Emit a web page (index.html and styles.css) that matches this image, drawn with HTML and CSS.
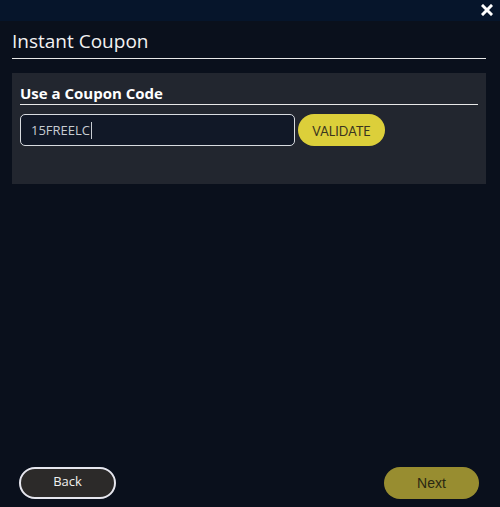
FILE: index.html
```html
<!DOCTYPE html>
<html>
<head>
<meta charset="utf-8">
<link rel="stylesheet" href="styles.css">
</head>
<body>
<div class="modal">
  <div class="topbar">
    <svg class="close" width="12" height="12" viewBox="0 0 12 12"><path d="M2 2 L10 10 M10 2 L2 10" stroke="#fff" stroke-width="3" stroke-linecap="square"/></svg>
  </div>
  <div class="content">
    <h1 class="title">Instant Coupon</h1>
    <div class="panel">
      <h2 class="panel-title">Use a Coupon Code</h2>
      <div class="row">
        <div class="input"><span class="value">15FREELC</span><span class="caret"></span></div>
        <button class="validate">VALIDATE</button>
      </div>
    </div>
  </div>
  <div class="footer">
    <button class="back">Back</button>
    <button class="next">Next</button>
  </div>
</div>
</body>
</html>
```

FILE: styles.css
```css
html, body { margin: 0; padding: 0; }
body {
  width: 500px; height: 507px; overflow: hidden;
  background: #0a101c;
  font-family: "Open Sans", sans-serif;
}
.modal { display: flex; flex-direction: column; height: 507px; }
.topbar {
  height: 21px; background: #06152b;
  display: flex; justify-content: flex-end; align-items: center;
  padding-right: 7px;
}
.close { display: block; margin-top: -1px; }
.content { flex: 1; padding: 0 14px 0 12px; }
.title {
  margin: 7px 0 0; font-size: 19px; font-weight: 400; color: #f2f2f2;
  line-height: 26px; padding-bottom: 4px;
  border-bottom: 1px solid #e8e8e8;
}
.panel {
  margin-top: 14px; background: #22262f;
  height: 111px; padding: 10px 8px 0 8px; box-sizing: border-box;
}
.panel-title {
  margin: 0; font-size: 15px; font-weight: 700; color: #fff;
  line-height: 20px; padding-bottom: 1px;
  border-bottom: 1px solid #e8e8e8;
}
.row { display: flex; align-items: center; margin-top: 9px; gap: 3px; }
.input {
  width: 275px; height: 32px; box-sizing: border-box;
  border: 1px solid #d8dbe0; border-radius: 5px; background: #111827;
  display: flex; align-items: center; padding-left: 10px;
  font-size: 13px; color: #c8ccd2;
}
.caret { width: 1px; height: 17px; background: #c8ccd2; margin-left: 1px; }
.validate {
  width: 87px; height: 32px; border: none; border-radius: 16px;
  background: #dccf3a; color: #3a3520;
  font-family: Lato, sans-serif; font-size: 12.5px; padding: 2px 0 0; letter-spacing: 0.1px;
}
.footer {
  display: flex; justify-content: space-between; align-items: center;
  padding: 0 21px 8px 19px; height: 32px;
}
.back {
  width: 97px; height: 32px; box-sizing: border-box;
  border: 2px solid #e6e6ee; border-radius: 16px; background: #2c2a29;
  color: #f0f0f0; font-family: "Open Sans", sans-serif; font-size: 13px;
  padding: 0 0 5px;
}
.next {
  width: 95px; height: 32px; border: none; border-radius: 16px;
  background: #988d30; color: #2a2812;
  font-family: "Liberation Sans", Arial, sans-serif; font-size: 14px; padding: 0;
}
```
